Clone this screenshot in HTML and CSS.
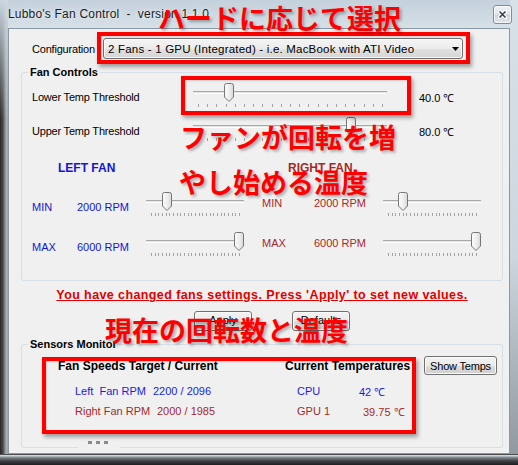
FILE: index.html
```html
<!DOCTYPE html>
<html lang="en">
<head>
<meta charset="utf-8">
<title>Lubbo's Fan Control</title>
<link rel="stylesheet" href="styles.css">
</head>
<body>
<div class="window">
  <svg class="defs" width="0" height="0" aria-hidden="true">
    <defs>
      <linearGradient id="thumbg" x1="0" y1="0" x2="1" y2="0">
        <stop offset="0" stop-color="#fdfdfd"/>
        <stop offset="0.6" stop-color="#ececec"/>
        <stop offset="1" stop-color="#d6d6d6"/>
      </linearGradient>
    </defs>
  </svg>

  <div class="titlebar">
    <span class="title">Lubbo's Fan Control  -  version 1.1.0</span>
    <div class="close">
      <svg width="9" height="9" viewBox="0 0 9 9"><path d="M1.5 1.5L7.5 7.5M7.5 1.5L1.5 7.5" stroke="#fff" stroke-width="3.4" stroke-linecap="square"/><path d="M1.5 1.5L7.5 7.5M7.5 1.5L1.5 7.5" stroke="#3a3f45" stroke-width="1.6"/></svg>
    </div>
  </div>

  <div class="client">
    <div class="config-row">
      <span class="config-label">Configuration</span>
      <div class="combo">
        <span class="combo-text">2 Fans - 1 GPU (Integrated) - i.e. MacBook with ATI Video</span>
        <svg class="combo-arrow" width="7" height="4" viewBox="0 0 7 4"><path d="M0 0H7L3.5 4Z" fill="#000"/></svg>
      </div>
    </div>

    <fieldset class="group">
      <legend>Fan Controls</legend>
      <div class="fan-body">
        <div class="thresh-row">
          <span class="thresh-label">Lower Temp Threshold</span>
          <div class="slider slider-wide">
            <div class="track"></div>
            <div class="ticks"></div>
            <svg class="thumb" style="left:31px" width="10" height="19" viewBox="0 0 10 19"><path d="M.5 2.5Q.5.5 2.5.5H7.5Q9.5.5 9.5 2.5V14L5 18.5.5 14Z" fill="url(#thumbg)" stroke="#767676"/></svg>
          </div>
          <span class="thresh-value">40.0 ℃</span>
        </div>
        <div class="thresh-row">
          <span class="thresh-label">Upper Temp Threshold</span>
          <div class="slider slider-wide">
            <div class="track"></div>
            <div class="ticks"></div>
            <svg class="thumb" style="left:153px" width="10" height="19" viewBox="0 0 10 19"><path d="M.5 2.5Q.5.5 2.5.5H7.5Q9.5.5 9.5 2.5V14L5 18.5.5 14Z" fill="url(#thumbg)" stroke="#767676"/></svg>
          </div>
          <span class="thresh-value">80.0 ℃</span>
        </div>

        <div class="fans">
          <div class="fan fan-left">
            <div class="fan-title">LEFT FAN</div>
            <div class="fan-row">
              <span class="fan-name">MIN</span>
              <span class="fan-val">2000 RPM</span>
              <div class="slider slider-small">
                <div class="track"></div>
                <div class="ticks ticks-small"></div>
                <svg class="thumb" style="left:16px" width="10" height="19" viewBox="0 0 10 19"><path d="M.5 2.5Q.5.5 2.5.5H7.5Q9.5.5 9.5 2.5V14L5 18.5.5 14Z" fill="url(#thumbg)" stroke="#767676"/></svg>
              </div>
            </div>
            <div class="fan-row">
              <span class="fan-name">MAX</span>
              <span class="fan-val">6000 RPM</span>
              <div class="slider slider-small">
                <div class="track"></div>
                <div class="ticks ticks-small"></div>
                <svg class="thumb" style="left:88px" width="10" height="19" viewBox="0 0 10 19"><path d="M.5 2.5Q.5.5 2.5.5H7.5Q9.5.5 9.5 2.5V14L5 18.5.5 14Z" fill="url(#thumbg)" stroke="#767676"/></svg>
              </div>
            </div>
          </div>
          <div class="fan fan-right">
            <div class="fan-title">RIGHT FAN</div>
            <div class="fan-row">
              <span class="fan-name">MIN</span>
              <span class="fan-val">2000 RPM</span>
              <div class="slider slider-small">
                <div class="track"></div>
                <div class="ticks ticks-small"></div>
                <svg class="thumb" style="left:15px" width="10" height="19" viewBox="0 0 10 19"><path d="M.5 2.5Q.5.5 2.5.5H7.5Q9.5.5 9.5 2.5V14L5 18.5.5 14Z" fill="url(#thumbg)" stroke="#767676"/></svg>
              </div>
            </div>
            <div class="fan-row">
              <span class="fan-name">MAX</span>
              <span class="fan-val">6000 RPM</span>
              <div class="slider slider-small">
                <div class="track"></div>
                <div class="ticks ticks-small"></div>
                <svg class="thumb" style="left:88px" width="10" height="19" viewBox="0 0 10 19"><path d="M.5 2.5Q.5.5 2.5.5H7.5Q9.5.5 9.5 2.5V14L5 18.5.5 14Z" fill="url(#thumbg)" stroke="#767676"/></svg>
              </div>
            </div>
          </div>
        </div>
      </div>
    </fieldset>

    <div class="warning">You have changed fans settings. Press 'Apply' to set new values.</div>

    <div class="buttons">
      <button class="btn btn-action">Apply</button>
      <button class="btn btn-action">Defaults</button>
    </div>

    <fieldset class="group">
      <legend>Sensors Monitor</legend>
      <div class="sensors-body">
        <div class="sensor-head">
          <span class="sh1">Fan Speeds Target / Current</span>
          <span class="sh2">Current Temperatures</span>
          <button class="btn btn-show">Show Temps</button>
        </div>
        <div class="sensor-row sensor-left">
          <span class="sn">Left  Fan RPM</span>
          <span class="sv">2200 / 2096</span>
          <span class="tn">CPU</span>
          <span class="tv">42 ℃</span>
        </div>
        <div class="sensor-row sensor-right">
          <span class="sn">Right Fan RPM</span>
          <span class="sv">2000 / 1985</span>
          <span class="tn">GPU 1</span>
          <span class="tv">39.75 ℃</span>
        </div>
        <div class="grip"><span class="dot"></span><span class="dot"></span><span class="dot"></span></div>
      </div>
    </fieldset>
  </div>

  <div class="mark mark-config"></div>
  <div class="mark mark-slider"></div>
  <div class="mark mark-sensors"></div>
  <div class="note note-1">ハードに応じて選択</div>
  <div class="note note-2">ファンが回転を増</div>
  <div class="note note-3">やし始める温度</div>
  <div class="note note-4">現在の回転数と温度</div>
</div>
</body>
</html>
```

FILE: styles.css
```css
html, body {
  margin: 0;
  padding: 0;
}

.window {
  position: relative;
  width: 518px;
  height: 465px;
  overflow: hidden;
  font-family: "Liberation Sans", Arial, sans-serif;
  font-size: 11px;
  color: #000;
  background-image:
    linear-gradient(180deg, #4c4f52 0, #4c4f52 1px, #cfd3d6 1px, #cfd3d6 2px, #8c9196 3px, #3c3f42 7px, #1d1e20 11px),
    linear-gradient(180deg, #cbd6e0 0, rgba(203, 214, 224, 0) 120px),
    linear-gradient(90deg, #262626, #4a4a4a 3px, #8a8a8a 5px, #b9b9b9 7px, #8d949a 8px),
    linear-gradient(180deg, #d9e1e8, #cdd6de 55%, #8e959c),
    linear-gradient(180deg, #c4d0db 0, #cdd8e2 14px, #d7e0e7 28px, #d2dbe2 100%);
  background-size: 100% 11px, 8px 100%, 8px 100%, 8px 100%, 100% 100%;
  background-position: left bottom, left top, left top, right top, left top;
  background-repeat: no-repeat;
}

.defs {
  position: absolute;
}

.titlebar {
  height: 28px;
  display: flex;
  align-items: flex-start;
}

.title {
  margin: 6px 0 0 8px;
  font-size: 12px;
  line-height: 16px;
  letter-spacing: 0.2px;
  white-space: pre;
  color: #1e1e1e;
  text-shadow: 0 0 5px rgba(255, 255, 255, 0.9);
}

.close {
  margin: 5px 6px 0 auto;
  width: 19px;
  height: 19px;
  box-sizing: border-box;
  border: 1px solid #7f8d9b;
  border-radius: 3px;
  background: linear-gradient(180deg, #f1f4f7, #dde4eb 48%, #ccd5de 52%, #dfe6ec);
  box-shadow: inset 0 0 0 1px rgba(255, 255, 255, 0.7);
  display: flex;
  align-items: center;
  justify-content: center;
}

.client {
  margin-left: 8px;
  width: 502px;
  height: 426px;
  box-sizing: border-box;
  border: 1px solid #8a98a6;
  background: #f0f0f0;
}

.config-row {
  display: flex;
  align-items: center;
  padding: 9px 0 0 23px;
}

.config-label {
  width: 71px;
  letter-spacing: -0.2px;
}

.combo {
  width: 360px;
  height: 21px;
  box-sizing: border-box;
  border: 1px solid #707070;
  border-radius: 3px;
  background: linear-gradient(180deg, #f4f4f4, #ececec 50%, #e1e1e1 50%, #d6d6d6);
  box-shadow: inset 0 0 0 1px rgba(255, 255, 255, 0.75);
  display: flex;
  align-items: center;
  padding-left: 4px;
}

.combo-text {
  flex: 1;
  white-space: nowrap;
  font-size: 11.5px;
  letter-spacing: 0.2px;
}

.combo-arrow {
  margin-right: 3px;
}

.group {
  margin: 6px 0 0 12px;
  width: 482px;
  box-sizing: border-box;
  padding: 0;
  border: 1px solid #d5dfe5;
  border-radius: 3px;
  min-inline-size: auto;
}

.group legend {
  margin-left: 6px;
  padding: 0 2px;
  font-weight: bold;
  font-size: 11px;
  line-height: 14px;
}

.fan-body {
  padding: 1px 0 12px 10px;
}

.thresh-row {
  display: flex;
  align-items: center;
  height: 34px;
}

.thresh-label {
  width: 161px;
  letter-spacing: -0.2px;
}

.thresh-value {
  margin-left: 32px;
}

.slider {
  position: relative;
  height: 26px;
  flex: none;
}

.slider-wide {
  width: 194px;
}

.slider-small {
  width: 98px;
  margin-top: 5px;
}

.track {
  margin-top: 7px;
  height: 3px;
  background: linear-gradient(180deg, #a9a9a9 0, #a9a9a9 1px, #e4e4e4 1px, #e4e4e4 2px, #fdfdfd 2px);
}

.ticks {
  margin: 10px 0 0 5px;
  width: 185px;
  height: 3px;
  background: repeating-linear-gradient(90deg, #a2a2a2 0, #a2a2a2 1px, transparent 1px, transparent 9.2px);
}

.ticks-small {
  width: 89px;
  background: repeating-linear-gradient(90deg, #a2a2a2 0, #a2a2a2 1px, transparent 1px, transparent 3.667px);
}

.thumb {
  position: absolute;
  top: -1px;
}

.fans {
  display: grid;
  grid-template-columns: 230px 1fr;
}

.fan-title {
  height: 40px;
  line-height: 40px;
  padding-left: 26px;
  font-weight: bold;
  font-size: 12px;
}

.fan-left {
  color: #1414d4;
}

.fan-right {
  color: #a52a2a;
}

.fan-row {
  display: flex;
  align-items: flex-start;
  height: 40px;
}

.fan-name,
.fan-val {
  line-height: 14px;
}

.fan-left .fan-name,
.fan-left .fan-val {
  margin-top: 12px;
}

.fan-right .fan-name,
.fan-right .fan-val {
  margin-top: 8px;
}

.fan-left .fan-name {
  width: 45px;
}

.fan-right .fan-name {
  width: 52px;
}

.fan-val {
  width: 69px;
}

.warning {
  margin-top: 7px;
  padding-left: 6px;
  line-height: 14px;
  text-align: center;
  color: #e00000;
  font-weight: bold;
  font-size: 12.5px;
  letter-spacing: 0.4px;
  text-decoration: underline;
}

.buttons {
  display: flex;
  gap: 40px;
  margin-top: 9px;
  padding-left: 185px;
}

.btn {
  box-sizing: border-box;
  border: 1px solid #707070;
  border-radius: 3px;
  background: linear-gradient(180deg, #f2f2f2, #ebebeb 50%, #dddddd 50%, #cfcfcf);
  box-shadow: inset 0 0 0 1px #fbfbfb;
  font-family: "Liberation Sans", Arial, sans-serif;
  font-size: 11px;
  color: #000;
  padding: 0;
}

.btn-action {
  width: 58px;
  height: 20px;
  line-height: 14px;
  padding-bottom: 3px;
}

.sensors-body {
  padding: 5px 0 0 36px;
}

.sensor-head {
  display: flex;
  align-items: center;
  height: 20px;
}

.sh1,
.sh2 {
  font-weight: bold;
  font-size: 12px;
}

.sh1 {
  width: 227px;
}

.sh2 {
  width: 139px;
}

.btn-show {
  width: 73px;
  height: 19px;
  align-self: flex-start;
  letter-spacing: -0.2px;
}

.sensor-row {
  display: flex;
  align-items: center;
  height: 20px;
  padding-left: 17px;
}

.sensor-left {
  margin-top: 5px;
  color: #1c1cdc;
}

.sensor-right {
  color: #a52a2a;
}

.sn {
  white-space: pre;
}

.sensor-left .sn {
  width: 78px;
}

.sensor-right .sn {
  width: 82px;
}

.sensor-left .sv {
  width: 144px;
}

.sensor-right .sv {
  width: 140px;
}

.sensor-left .tn {
  width: 62px;
}

.sensor-right .tn {
  width: 66px;
}

.grip {
  display: flex;
  gap: 4px;
  width: 42px;
  height: 12px;
  box-sizing: border-box;
  margin: 17px 0 -3px 20px;
  padding: 3px 0 0 10px;
  background: #f0f0f0;
}

.dot {
  width: 4px;
  height: 3px;
  background: #8c8c8c;
}

.mark {
  position: absolute;
  box-sizing: border-box;
  border: 4px solid #ff0000;
  box-shadow: 2px 3px 4px rgba(0, 0, 0, 0.35), inset 1px 1px 2px rgba(0, 0, 0, 0.15);
}

.mark-config {
  left: 97px;
  top: 32px;
  width: 373px;
  height: 32px;
}

.mark-slider {
  left: 181px;
  top: 76px;
  width: 230px;
  height: 39px;
}

.mark-sensors {
  left: 42px;
  top: 357px;
  width: 374px;
  height: 77px;
}

.note {
  position: absolute;
  font-family: "Noto Sans CJK JP", "Noto Sans CJK SC", sans-serif;
  font-weight: 700;
  font-size: 27px;
  line-height: 27px;
  color: #ff0000;
  white-space: nowrap;
  text-shadow: 2px 2px 3px rgba(0, 0, 0, 0.3);
}

.note-1 {
  left: 158px;
  top: 4px;
}

.note-2 {
  left: 180px;
  top: 123px;
}

.note-3 {
  left: 179px;
  top: 168px;
}

.note-4 {
  left: 105px;
  top: 316px;
}
```
